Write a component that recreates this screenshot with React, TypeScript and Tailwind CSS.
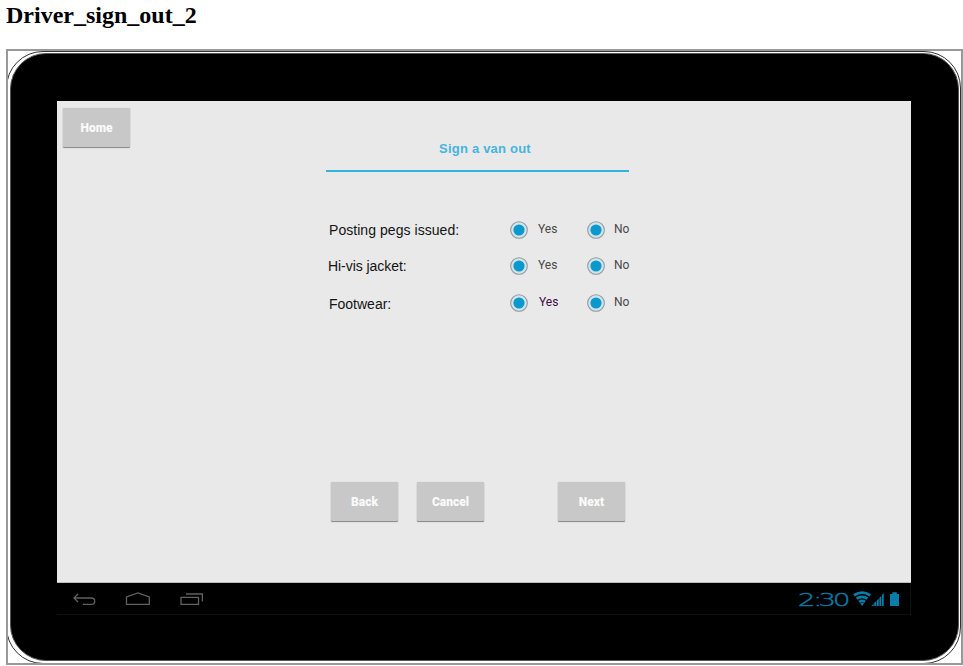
import React from 'react';

function PushButton({ label }: { label: string }) {
  return (
    <button className="flex h-[39px] w-[67px] shrink-0 items-center justify-center rounded-[1px] bg-[#c8c8c8] pt-px font-['Roboto',sans-serif] text-[12px] leading-none font-black text-[#fafafa] shadow-[0_1px_1px_#858585,0_0_1px_#bbbbbb]">
      {label}
    </button>
  );
}

function Radio() {
  return (
    <svg className="size-5 shrink-0" viewBox="0 0 20 20">
      <circle cx="10" cy="10.3" r="8.8" fill="#c4c8ca" />
      <circle cx="10" cy="10" r="8.3" fill="#cfe5ee" stroke="#999ea1" strokeWidth="1.1" />
      <circle cx="10" cy="10" r="5.6" fill="#0b99cd" />
    </svg>
  );
}

type RowProps = { label: string; rowClass: string; labelClass: string; yesClass: string };

function Question({ label, rowClass, labelClass, yesClass }: RowProps) {
  return (
    <div className={`flex h-5 items-center ${rowClass}`}>
      <span className={`w-[183px] shrink-0 text-[14px] leading-5 whitespace-nowrap text-[#141414] ${labelClass}`}>{label}</span>
      <Radio />
      <span className={`w-[57px] shrink-0 font-['Roboto',sans-serif] text-[12px] leading-5 ${yesClass}`}>Yes</span>
      <Radio />
      <span className="-mt-[2px] pl-2 font-['Roboto',sans-serif] text-[12px] leading-5 text-[#484848]">No</span>
    </div>
  );
}

function SystemBar() {
  return (
    <div className="flex h-8 items-center justify-between border-r border-b border-[#101010] bg-black">
      <svg className="h-8 w-[160px]" viewBox="57 583 160 32" fill="none" stroke="#606060" strokeWidth="1.3">
        <path d="M78 594l-4 4 4 4M74 598h17.5a3.2 3.2 0 0 1 0 6.4H83" />
        <path d="M126.5 604.3v-7.4l11.4-4 11.4 4v7.4z" />
        <path d="M181 597.4h17.5v6.9H181zM186 594h16.4v7.6" />
      </svg>
      <svg className="h-8 w-[120px]" viewBox="790 583 120 32" fill="#087da9">
        <text
          transform="scale(1.56 1)"
          x="511.4 521.2 524.5 533.8"
          y="605.6"
          stroke="#087da9"
          strokeWidth="0.35"
          className="font-['DejaVu_Sans',sans-serif] text-[18px] font-extralight"
        >
          2:30
        </text>
        <path fill="none" stroke="#087da9" strokeWidth="2.8" d="M854 595.2q8.1-5.2 16.2 0M856.7 598.7q5.4-3.6 10.8 0M859.2 601.8q2.9-1.9 5.8 0" />
        <path d="M860.2 603.4q1.9-1.2 3.8 0l-1.9 2.6zM871.3 606l2.3-2.3v2.3zM874.2 603l2-2v5h-2zM876.8 600.4l2-2v7.6h-2zM879.4 597.8l1.9-1.9v10.1h-1.9zM882 594.7l1.7-1.7V606H882z" />
        <path d="M890 594h2.4v-1.8h4.4v1.8h2.2v12h-9z" />
      </svg>
    </div>
  );
}

export default function App() {
  return (
    <main className="h-[666px] w-[963px] overflow-hidden bg-white pl-[6px] font-['Liberation_Sans',Arial,sans-serif]">
      <h1 className="h-[49px] pt-[2px] font-['Liberation_Serif',serif] text-[24px] leading-[27px] font-bold text-black">Driver_sign_out_2</h1>
      <div className="h-[616px] w-[957px] overflow-hidden border-2 border-[#999999] bg-white">
        <div className="-ml-[2px] h-[613px] w-[955px] rounded-[37px] border border-[#333333] pt-px pr-px pb-[2px] pl-[3px]">
          <div className="h-full w-full rounded-[36px] border border-[#555555] bg-black pt-[47px] pl-[46px]">
            <section className="h-[482px] w-[854px] border-b border-[#bcbcbc] bg-[#e9e9e9] pt-[7px] pl-[6px]">
              <PushButton label="Home" />
              <div className="-mt-[8px] ml-[263px] w-[303px]">
                <h2 className="h-[33px] border-b-2 border-[#35b3df] pt-px pl-[113px] text-[13px] leading-[18px] font-bold tracking-[0.22px] whitespace-nowrap text-[#42b5e1]">Sign a van out</h2>
                <div className="mt-[48px]">
                  <Question label="Posting pegs issued:" rowClass="" labelClass="pl-[3px] tracking-[0.05px]" yesClass="-mt-[2px] pl-[9px] text-[#484848]" />
                  <Question label="Hi-vis jacket:" rowClass="mt-4" labelClass="pl-[2px] tracking-[-0.05px]" yesClass="-mt-[2px] pl-[9px] text-[#484848]" />
                  <Question label="Footwear:" rowClass="mt-[17px]" labelClass="pl-[3px] pt-[2px]" yesClass="-mt-[2px] pl-[10px] text-[#400d49]" />
                </div>
                <div className="mt-[168.5px] flex pl-[5px]">
                  <PushButton label="Back" />
                  <div className="ml-[19px]"><PushButton label="Cancel" /></div>
                  <div className="ml-[74px]"><PushButton label="Next" /></div>
                </div>
              </div>
            </section>
            <div className="w-[854px]"><SystemBar /></div>
          </div>
        </div>
      </div>
    </main>
  );
}
